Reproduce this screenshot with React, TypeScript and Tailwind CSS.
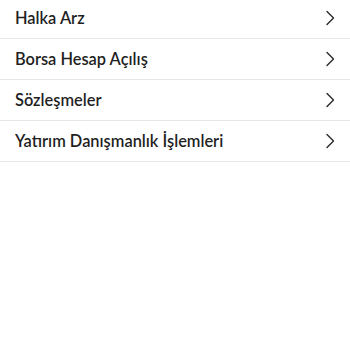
const items = ["Halka Arz", "Borsa Hesap Açılış", "Sözleşmeler", "Yatırım Danışmanlık İşlemleri"];

function Chevron() {
  return (
    <svg width="10" height="16" viewBox="0 0 10 16" fill="none" className="shrink-0">
      <path d="M2 1.5L8.5 8L2 14.5" stroke="#2a2a2a" strokeWidth="1.4" strokeLinecap="round" strokeLinejoin="round" />
    </svg>
  );
}

export default function App() {
  return (
    <div className="h-[350px] w-[350px] overflow-hidden bg-white" style={{ fontFamily: "Lato, 'Liberation Sans', sans-serif" }}>
      <ul className="-mt-[2px]">
        {items.map((label) => (
          <li key={label} className="flex h-[41px] items-center justify-between border-b border-[#e6e6e6] pl-[15px] pr-[15px]">
            <span className="text-[16.4px] font-semibold text-[#1f1f1f]">{label}</span>
            <Chevron />
          </li>
        ))}
      </ul>
    </div>
  );
}
